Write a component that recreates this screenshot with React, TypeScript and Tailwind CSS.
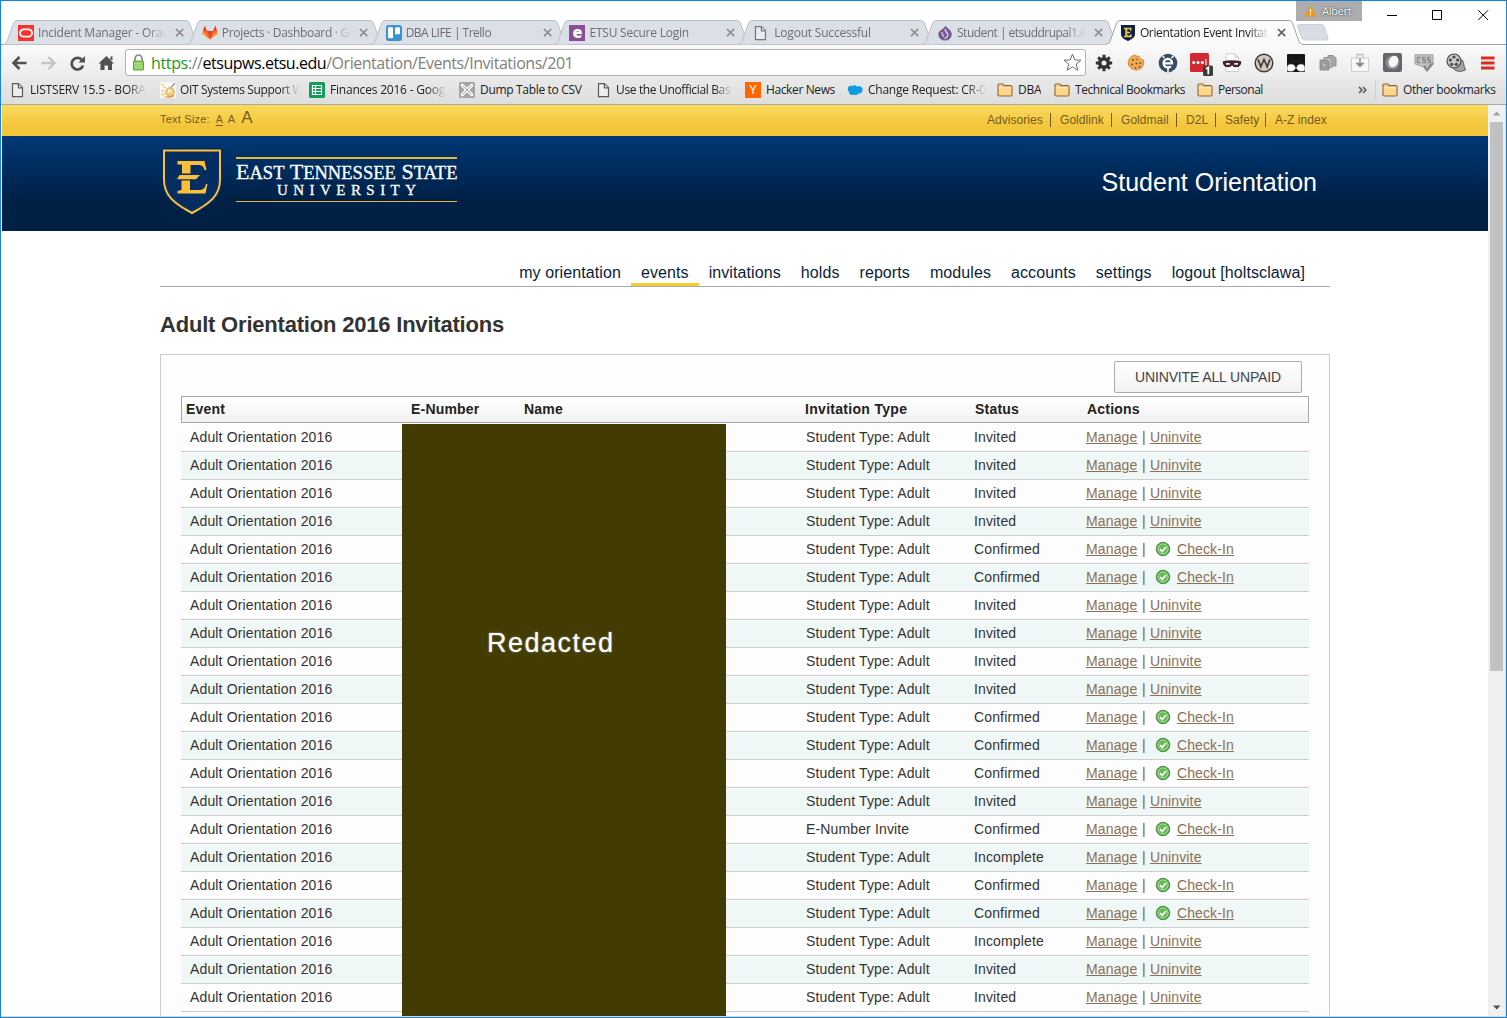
import React from "react";

const UI = "font-['Open_Sans','Noto_Sans',sans-serif]";
const fade = "[mask-image:linear-gradient(to_right,black_84%,transparent)]";

/* ---------- small drawings ---------- */
const PageIcon = ({ c = "#5a5a5a" }: { c?: string }) => (
  <svg width="16" height="16" viewBox="0 0 16 16" fill="#fff" fillOpacity=".4" stroke={c} strokeWidth="1.2">
    <path d="M2.5 1.6h6l4 4v9h-10z" />
    <path d="M8.4 1.6v4.2h4.1" />
  </svg>
);
const Oracle = () => (
  <svg width="16" height="16" viewBox="0 0 16 16">
    <rect width="16" height="16" fill="#f8312f" />
    <rect x="2" y="4.4" width="12" height="7.2" rx="3.6" fill="none" stroke="#fff" strokeWidth="1.9" />
  </svg>
);
const Gitlab = () => (
  <svg width="16" height="16" viewBox="0 0 16 16">
    <path d="M8 14.5 0 8.7l1-3 1.7-5 2.2 5.2h6.2l2.2-5.2 1.7 5 1 3z" fill="#fc9a3a" />
    <path d="M8 14.5 1 5.9h3.9zM8 14.5 15 5.9h-3.9z" fill="#f76b31" />
    <path d="M8 14.5 4.9 5.9h6.2zM1 5.9 2.7.7l2.2 5.2zM15 5.9 13.3.7l-2.2 5.2z" fill="#e24329" />
  </svg>
);
const Trello = () => (
  <svg width="16" height="16" viewBox="0 0 16 16">
    <rect width="16" height="16" rx="2.5" fill="#3a94cd" />
    <rect x="2" y="2.2" width="5" height="11" rx="1" fill="#fff" />
    <rect x="9" y="2.2" width="5" height="7" rx="1" fill="#fff" />
  </svg>
);
const Ellucian = () => (
  <span className="flex h-4 w-4 items-center justify-center bg-[#8a4d96] pb-[2px] font-['Open_Sans',sans-serif] text-[16px] leading-none font-extrabold text-white">
    e
  </span>
);
const Drupal = () => (
  <svg width="16" height="16" viewBox="0 0 16 16">
    <path d="M8.5.5C9 3 14.800 4.500 14.800 9.200A6.700 6.300 0 0 1 1.300 9.200C1.300 5 7 4.500 8.500.5z" fill="#775a98" />
    <path d="M8.200 4c-.5 3.200 3 3.300 2.600 6.300-.3 2-2 2.500-3.300 3.500M5.200 7c-1.500 2.500 2 2.800 1.600 5" fill="none" stroke="#dfe3ea" strokeWidth="1.2" />
  </svg>
);
const EtsuMini = () => (
  <svg width="16" height="16" viewBox="0 0 16 16">
    <path d="M1 0h14v9c0 4-4 5.500-7 7-3-1.500-7-3-7-7z" fill="#0b2149" />
    <path d="M4 2.700h7.500v3h-1.500V4.300H7.300v2.400H10v1.500H7.300v2.300h2.900V9.200h1.500v3H4v-1.500h1.300V4.300H4z" fill="#f5c63c" />
  </svg>
);
const Folder = () => (
  <svg width="16" height="14" viewBox="0 0 16 14" fill="none">
    <path d="M1 3.800V2.200Q1 1 2.200 1h3.400Q6.800 1 6.800 2.600h6.900Q15 2.600 15 3.900v7.900q0 1.200-1.200 1.200H2.200Q1 13 1 11.800z" fill="#fbd58a" stroke="#946330" strokeWidth="1.100" />
    <path d="M1.800 4.800h12.400" stroke="#ffefc7" />
  </svg>
);
const Sheet = () => (
  <svg width="16" height="16" viewBox="0 0 16 16">
    <rect width="16" height="16" rx="1.500" fill="#109d58" />
    <path d="M3.500 3.500h9v9h-9zM3.500 6.500h9M3.500 9.500h9M6.500 3.500v9" fill="none" stroke="#fff" strokeWidth="1.200" />
  </svg>
);
const Oit = () => (
  <svg width="16" height="16" viewBox="0 0 16 16">
    <rect width="16" height="16" fill="#fcf8f0" />
    <path d="M1 2l3 1.500M3 5l3 1M1 8.500l3 .5M1 13l4-1" stroke="#f3c78e" strokeWidth="1.300" fill="none" />
    <path d="M15 1l-4 4.500" stroke="#8aa2b8" strokeWidth="1.500" />
    <circle cx="10" cy="10" r="4.200" fill="#f5cf85" stroke="#e2a04c" />
    <circle cx="9.500" cy="9" r="1.700" fill="#fff4d8" />
    <path d="M5 14.500q5 1.500 9-1" stroke="#e08b2c" strokeWidth="1.300" fill="none" />
  </svg>
);
const Dump = () => (
  <svg width="16" height="16" viewBox="0 0 16 16">
    <rect width="16" height="16" rx="1.500" fill="#a0a5aa" />
    <path d="M3.300 3.300l9.400 9.400M12.700 3.300l-9.400 9.400" stroke="#fff" strokeWidth="3.200" strokeLinecap="round" />
    <path d="M3.600 3.600l8.800 8.800M12.400 3.600l-8.800 8.800" stroke="#a0a5aa" strokeWidth="1" />
  </svg>
);
const YC = () => (
  <span className="flex h-4 w-4 items-center justify-center bg-[#ff6600] font-['Liberation_Sans',sans-serif] text-[12px] leading-none text-white">Y</span>
);
const Cloud = () => (
  <svg width="16" height="16" viewBox="0 0 16 16">
    <g fill="#109cde">
      <circle cx="4" cy="7" r="3.200" /><circle cx="7.500" cy="6.200" r="3" /><circle cx="12" cy="7.800" r="3.600" /><circle cx="5" cy="10" r="3" /><circle cx="8.600" cy="10" r="3" />
    </g>
  </svg>
);

/* ---------- tab strip ---------- */
const TabShape = ({ active }: { active?: boolean }) => (
  <svg className="absolute inset-0" width="197" height="25" viewBox="0 0 197 25">
    <path
      d="M0 24.500C3 24 3.500 22.500 4.500 20L10 4.500C11 1.500 12 .5 15 .5H182C185 .5 186 1.500 187 4.500L192.500 20C193.500 22.500 194 24 197 24.500"
      fill={active ? "#fafafa" : "#dbdfe6"}
      stroke={active ? "#a0a0a0" : "#bcbfc4"}
    />
    {active && <path d="M1 24.500H196" stroke="#f9f9f9" strokeWidth="1.200" />}
  </svg>
);
const tabs = [
  { t: "Incident Manager - Orac", i: <Oracle />, s: "tracking-[-0.22px]" },
  { t: "Projects · Dashboard · Gi", i: <Gitlab />, s: "tracking-[-0.3px]" },
  { t: "DBA LIFE | Trello", i: <Trello />, s: "tracking-[-0.5px]" },
  { t: "ETSU Secure Login", i: <Ellucian />, s: "tracking-[-0.22px]" },
  { t: "Logout Successful", i: <PageIcon c="#777" />, s: "ml-[5px]! w-[128px]! tracking-[-0.2px]" },
  { t: "Student | etsuddrupal1.e", i: <Drupal />, s: "tracking-[-0.52px]" },
  { t: "Orientation Event Invitat", i: <EtsuMini />, s: "tracking-[-0.35px]" },
];
const TabStrip = () => (
  <div className="relative flex h-[44px] shrink-0 items-end border-b border-[#a0a3a7] bg-white pl-[2px]">
    {tabs.map((b, k) => {
      const active = k === 6;
      return (
        <div key={b.t} className={`relative mr-[-13.200px] mb-[-1px] flex h-[25px] w-[197px] shrink-0 items-center pl-[15px] ${active ? "z-10" : ""}`}>
          <TabShape active={active} />
          <span className={`relative flex h-4 w-4 shrink-0 ${active ? "left-[-1px]" : ""}`}>{b.i}</span>
          <span className={`relative ml-[4px] w-[129px] overflow-hidden text-[12px] leading-[18px] whitespace-nowrap ${UI} ${b.s} ${active ? "left-[-1px] text-[#222]" : "text-[#6c6f73]"} ${fade}`}>{b.t}</span>
          <svg className={`relative ml-[7px] ${active ? "left-[-1px]" : ""}`} width="11" height="11" viewBox="0 0 11 11">
            <path d="M2 2l7.200 7.200M9.200 2L2 9.200" stroke={active ? "#5f5f5f" : "#8c8c8c"} strokeWidth="1.700" />
          </svg>
        </div>
      );
    })}
    <svg className="mb-[3px] ml-[6px]" width="33" height="17" viewBox="0 0 33 17">
      <path d="M3 .5h22q2.500 0 3.500 2.500l3.500 11q.5 2-1.500 2H9q-2.500 0-3.500-2.500L1.500 2.500Q1 .5 3 .5z" fill="#d8dde5" stroke="#cdd1d7" />
    </svg>
    <div className="absolute top-0 right-0 flex items-start">
      <div className={`flex h-[20px] w-[66px] items-center gap-[5px] bg-[#adadad] pl-[8px] text-[11px] leading-[18px] text-white [text-shadow:0_0_2px_#333,0_0_1px_#555] ${UI}`}>
        <svg width="13" height="12" viewBox="0 0 13 12">
          <path d="M6.500.5l6 11H.5z" fill="#f29513" />
          <path d="M6.500 4v4M6.500 9v1.300" stroke="#fff" strokeWidth="1.200" />
        </svg>
        <span className="tracking-[-0.3px]">Albert</span>
      </div>
      <svg width="144" height="30" viewBox="0 0 144 30" fill="none" stroke="#000">
        <path d="M25 14.500h10M70.500 9.500h9v9h-9zM116.300 9.300l9.700 9.700M126 9.300l-9.700 9.700" />
      </svg>
    </div>
  </div>
);

/* ---------- toolbar ---------- */
const ext = [
  <svg width="18" height="18" viewBox="0 0 18 18"><circle cx="9" cy="9" r="4.300" fill="none" stroke="#333" strokeWidth="3.600" /><g stroke="#333" strokeWidth="3"><path d="M9 .8v3M9 14.200v3M.8 9h3M14.200 9h3M3.200 3.200l2 2M12.800 12.800l2 2M14.800 3.200l-2 2M5.200 12.800l-2 2" /></g></svg>,
  <svg width="18" height="18" viewBox="0 0 18 18"><path d="M8 1q2 2 4 1 .5 3 4.500 4 1.500 5-2.500 8.500-4.500 3-9 .5Q.5 12 1 8 2.500 2 8 1z" fill="#ecab55" stroke="#d08430" strokeWidth=".8" /><g fill="#8a4a1c"><circle cx="6" cy="6" r="1.100" /><circle cx="10" cy="5.500" r=".8" /><circle cx="5" cy="10.500" r="1" /><circle cx="9.500" cy="9.500" r="1.100" /><circle cx="13.300" cy="9" r=".9" /><circle cx="8.500" cy="13.800" r=".9" /><circle cx="12.500" cy="12.800" r=".9" /></g></svg>,
  <svg width="20" height="20" viewBox="0 0 20 20"><circle cx="10" cy="10" r="9.300" fill="#354d61" /><path d="M5.500 10.400h8.600a4.300 4.300 0 1 0-1.300 2.900" fill="none" stroke="#fff" strokeWidth="2.300" /><path d="M10 14v5M4.500 3l2 2M15.500 3l-2 2" stroke="#fff" strokeWidth="1.500" /></svg>,
  <svg className="shrink-0" width="26" height="26" viewBox="0 0 26 26"><rect x="3" y="3" width="19" height="19" rx="1.500" fill="#d32932" /><g fill="#fff"><circle cx="6.700" cy="12.500" r="1.500" /><circle cx="11" cy="12.500" r="1.500" /><circle cx="15.300" cy="12.500" r="1.500" /><path d="M18.500 9h1v7h-1z" /></g><rect x="16" y="15.500" width="10" height="10.500" rx="1.500" fill="#3c3c3c" /><path d="M19 18.800l2.300-1.200v6.700" fill="none" stroke="#fff" strokeWidth="1.800" /></svg>,
  <svg width="20" height="20" viewBox="0 0 20 20"><path d="M4 .8h9l3.500 3.500V18.500H4z" fill="#fff" stroke="#c4c4c4" strokeWidth=".8" /><path d="M13 .8v3.500h3.500" fill="#e4e4e4" stroke="#c4c4c4" strokeWidth=".8" /><path d="M.8 8.200q9.200-2 18.400 0 .3 6-5.700 6-2.500 0-3.500-2-1 2-3.500 2-6 0-5.700-6z" fill="#43242a" /><path d="M4 10.800h3.800M12.200 10.800H16" stroke="#f7ecec" strokeWidth="1.700" /></svg>,
  <svg width="20" height="20" viewBox="0 0 20 20"><circle cx="10" cy="10" r="8.800" fill="#d2c9c5" stroke="#3e3735" strokeWidth="1.400" /><path d="M4 6.200l2.800 7.500L10 6.500l3.200 7.200L16 6.200" fill="none" stroke="#463b38" strokeWidth="1.700" /></svg>,
  <svg width="18" height="18" viewBox="0 0 18 18"><rect width="18" height="18" rx="1" fill="#161616" /><path d="M0 16.500V14q0-4 4.200-4 3.800 0 4.300 3.500h1Q10 10 13.800 10 18 10 18 14v2.500q-1 1-4.200 1-3.300 0-4.300-3h-1q-1 3-4.300 3T0 16.500z" fill="#fff" stroke="#555" strokeWidth=".6" /></svg>,
  <svg width="18" height="18" viewBox="0 0 18 18" fill="#a9a9a9" stroke="#8c8c8c" strokeWidth=".9"><path d="M9 1.500h5l3 2.500v8H9z" /><path d="M5 3.500h6l2 2v8H5z" fill="#b9b9b9" /><path d="M1 6h7l2 2v8H1z" fill="#9d9d9d" /><path d="M3 9h4v4H3z" fill="#bdbdbd" /></svg>,
  <svg width="20" height="20" viewBox="0 0 20 20"><path d="M1.500 5h17v13.500h-17z" fill="#f7f7f7" stroke="#cecece" /><path d="M7 5V1.500h6V5" fill="none" stroke="#c2c2c2" strokeWidth="1.500" /><path d="M10 5v7M7 10.500l3 3 3-3z" fill="#8d8d8d" stroke="#8d8d8d" strokeWidth="1.500" /></svg>,
  <svg width="19" height="19" viewBox="0 0 19 19"><rect width="19" height="19" rx="2" fill="#626569" /><circle cx="9.500" cy="9.500" r="7" fill="#8d9092" /><ellipse cx="10.500" cy="8.500" rx="4.500" ry="6" transform="rotate(25 10.500 8.500)" fill="#f8f8f8" /></svg>,
  <svg width="20" height="18" viewBox="0 0 20 18"><path d="M1 .800h18V10l-9 3-9-3z" fill="#c3c3c3" stroke="#a2a2a2" /><path d="M6.500 3.500h-3v5h3M11.500 3.500H8.700V6h2.600v2.500H8.500M16.500 3.500h-2.800V6h2.600v2.500h-2.800" fill="none" stroke="#8a8a8a" strokeWidth="1.300" /><path d="M10 12l3 4 6-7" fill="none" stroke="#858585" strokeWidth="2.500" /></svg>,
  <svg width="20" height="20" viewBox="0 0 20 20"><path d="M13 5q5 2 5 8l1.500 4-5 1.500q-6 0-8-4" fill="#a5a5a5" stroke="#5a5a5a" /><circle cx="8" cy="8" r="7" fill="#c9c9c9" stroke="#4a4a4a" strokeWidth="1.200" /><g fill="#4a4a4a"><circle cx="8" cy="4" r="1.600" /><circle cx="4.300" cy="7" r="1.600" /><circle cx="11.700" cy="7" r="1.600" /><circle cx="5.700" cy="11.300" r="1.600" /><circle cx="10.300" cy="11.300" r="1.600" /></g></svg>,
  <svg width="14" height="14" viewBox="0 0 14 14" fill="#dc2b1f"><path d="M0 .5h13.500v3H0zM0 5.500h13.500v3H0zM0 10.500h13.500v3H0z" /></svg>,
];
const Toolbar = () => (
  <div className="flex h-[35px] shrink-0 items-center bg-gradient-to-b from-[#fafafa] to-[#eaeaea] pl-[10px]">
    <svg width="106" height="18" viewBox="0 0 106 18" fill="none">
      <path d="M15.500 9H3M8.500 3L2.500 9l6 6" stroke="#505050" strokeWidth="2.600" />
      <path d="M30.500 9H43M37.500 3l6 6-6 6" stroke="#c5c5c5" strokeWidth="2.400" />
      <path d="M70.800 5.800A5.800 5.800 0 1 0 72 11.500" stroke="#505050" strokeWidth="2.700" />
      <path d="M74 2v6.500h-6.500z" fill="#505050" />
      <path d="M95.500 2l7.500 7.500h-2V16h-4v-4.500h-3.500V16h-4V9.500h-2zM99.500 2.500h2V6h-2z" fill="#505050" />
    </svg>
    <div className="ml-[8px] flex h-[27px] w-[961px] items-center rounded-[3px] border border-[#b0b0b0] bg-white pl-[6px]">
      <svg width="13" height="17" viewBox="0 0 13 17">
        <path d="M3 8V4.500a3.500 3.500 0 0 1 7 0V8" fill="none" stroke="#8a8a8a" strokeWidth="1.700" />
        <rect x="1.500" y="7" width="10" height="9" rx=".5" fill="#8fd05f" stroke="#58a636" />
        <path d="M2.500 9.500h8M2.500 11.500h8M2.500 13.500h8" stroke="#a8df80" />
      </svg>
      <span className={`ml-[6px] w-[900px] text-[16px] leading-[22px] tracking-[-0.46px] whitespace-nowrap text-[#808080] ${UI}`}>
        <span className="tracking-[-0.35px] text-[#1a9a26]">https</span>://<span className="text-black">etsupws.etsu.edu</span>/Orientation/Events/Invitations/201
      </span>
      <svg className="ml-auto mr-[3px]" width="19" height="19" viewBox="0 0 19 19">
        <path d="M9.500 1l2.300 5.900 6.200.3-4.900 3.900 1.700 6.200-5.300-3.500-5.300 3.500 1.700-6.200L1 7.200l6.200-.3z" fill="#fff" stroke="#6f6f6f" />
      </svg>
    </div>
    <div className="ml-[2px] flex">
      {ext.map((e, k) => (
        <span key={k} className="flex h-[26px] w-8 shrink-0 items-center justify-center">{e}</span>
      ))}
    </div>
  </div>
);

/* ---------- bookmarks ---------- */
const marks = [
  { t: "LISTSERV 15.5 - BORA", i: <PageIcon />, w: "w-[150px]", g: "ml-[4px] w-[116px]", f: true, s: "tracking-[-0.2px]" },
  { t: "OIT Systems Support W", i: <Oit />, w: "w-[149px]", g: "ml-[4px] w-[120px]", f: true, s: "tracking-[-0.36px]" },
  { t: "Finances 2016 - Goog", i: <Sheet />, w: "w-[150px]", g: "ml-[5px] w-[116px]", f: true, s: "tracking-[-0.2px]" },
  { t: "Dump Table to CSV", i: <Dump />, w: "w-[137px]", g: "ml-[5px]", s: "tracking-[-0.32px]" },
  { t: "Use the Unofficial Bas", i: <PageIcon />, w: "w-[149px]", g: "ml-[4px] w-[117px]", f: true, s: "tracking-[-0.35px]" },
  { t: "Hacker News", i: <YC />, w: "w-[102px]", g: "ml-[5px]", s: "tracking-[-0.38px]" },
  { t: "Change Request: CR-0", i: <Cloud />, w: "w-[150px]", g: "ml-[5px] w-[118px]", f: true, s: "tracking-[-0.25px]" },
  { t: "DBA", i: <Folder />, w: "w-[57px]", g: "ml-[5px]", s: "tracking-[-0.2px]" },
  { t: "Technical Bookmarks", i: <Folder />, w: "w-[143px]", g: "ml-[5px]", s: "tracking-[-0.45px]" },
  { t: "Personal", i: <Folder />, w: "w-[160px]", g: "ml-[5px]", s: "tracking-[-0.5px]" },
];
const Bookmarks = () => (
  <div className={`flex h-[25px] shrink-0 items-center border-b border-[#a9a9a9] bg-gradient-to-b from-[#e8e8e8] to-[#dedede] pb-[4px] pl-[9px] text-[12px] leading-[18px] text-[#222] ${UI}`}>
    {marks.map((m) => (
      <div key={m.t} className={`flex shrink-0 items-center ${m.w}`}>
        <span className="flex w-4 shrink-0">{m.i}</span>
        <span className={`overflow-hidden whitespace-nowrap ${m.g} ${m.s} ${m.f ? fade : ""}`}>{m.t}</span>
      </div>
    ))}
    <svg className="ml-px" width="9" height="8" viewBox="0 0 9 8" fill="none" stroke="#555" strokeWidth="1.500">
      <path d="M1 1l3 3-3 3M5 1l3 3-3 3" />
    </svg>
    <span className="ml-[8px] h-[20px] w-px bg-[#cdd2d8]" />
    <span className="ml-[6px] flex w-4 shrink-0"><Folder /></span>
    <span className="ml-[5px] tracking-[-0.4px] whitespace-nowrap">Other bookmarks</span>
  </div>
);

/* ---------- site ---------- */
const links = [
  { t: "Advisories", c: "w-[64px]" },
  { t: "Goldlink", c: "w-[52px]" },
  { t: "Goldmail", c: "w-[56px]" },
  { t: "D2L", c: "w-[30px]" },
  { t: "Safety", c: "w-[41px]" },
  { t: "A-Z index", c: "w-[54px]" },
];
const SiteHeader = () => (
  <>
    <div className="flex h-[31px] shrink-0 items-start justify-between bg-gradient-to-b from-[#fadb5c] to-[#f3c53a] to-70% pr-[157px] pl-[158px] text-[#735a1d]">
      <div className="flex items-baseline pt-[3px] text-[11px] leading-[19px] tracking-[0.22px]">
        <span>Text Size:</span>
        <span className="ml-[5px] px-px text-[10px] underline underline-offset-2">A</span>
        <span className="ml-[4px] text-[11px]">A</span>
        <span className="ml-[6px] text-[17px]">A</span>
      </div>
      <div className="mt-[8px] flex text-[12px] leading-[14px] tracking-[0.05px]">
        {links.map((l, k) => (
          <span key={l.t} className={`mr-[9px] h-[14px] shrink-0 whitespace-nowrap last:mr-[2px] ${l.c} ${k < 5 ? "border-r border-[#735a1d]" : ""}`}>{l.t}</span>
        ))}
      </div>
    </div>
    <div className="flex h-[95px] shrink-0 items-start justify-between bg-gradient-to-b from-[#003876] to-[#002045] to-70% pr-[171px] pl-[159px] text-white">
      <div className="flex">
        <svg className="mt-[11px]" width="62" height="70" viewBox="0 0 62 70">
          <path d="M1 1h60v33c0 17-12 25-30 34C13 59 1 51 1 34z" fill="#002b5c" />
          <path d="M3 3.500h56v29c0 16-10 24-28 33.500C13 56.500 3 48.500 3 32.500z" fill="#042d62" stroke="#fdbf38" strokeWidth="2" />
          <g fill="#fdbf38">
            <path d="M16.500 14h27l2 9h-2q-1-5-6-5h-8v8.500h-8.500V17.500h-4.500v-2z" />
            <path d="M18.500 28H39l-4 4.200H16z" />
            <path d="M20.500 33.500H29v9.500h9q6 0 7-6H46.500l-2 9.500H16.500V44l4-1z" />
          </g>
        </svg>
        <div className="mt-[21px] ml-[13px] flex h-[45px] w-[221px] flex-col border-t-2 border-b border-[#eab740] font-['Liberation_Serif',serif]">
          <div className="mt-[2px] text-[22px] leading-[22px] tracking-[0.03px] whitespace-nowrap [-webkit-text-stroke:0.3px_white]">
            E<span className="text-[18.500px]">AST</span> T<span className="text-[18.500px]">ENNESSEE</span> S<span className="text-[18.500px]">TATE</span>
          </div>
          <div className="mt-[-2px] ml-[41px] text-[15px] leading-[17px] tracking-[5.450px] whitespace-nowrap [-webkit-text-stroke:0.3px_white]">UNIVERSITY</div>
        </div>
      </div>
      <div className="mt-[31px] text-[25px] leading-[30px] whitespace-nowrap">Student Orientation</div>
    </div>
  </>
);

const nav = ["my orientation", "events", "invitations", "holds", "reports", "modules", "accounts", "settings", "logout [holtsclawa]"];
const Nav = () => (
  <div className="mt-[29px] flex h-[27px] shrink-0 justify-end border-b border-[#aaa] pr-[15px] text-[16px] leading-[26px] tracking-[0.09px] text-[#0b1d3a]">
    {nav.map((n) => (
      <span key={n} className={`h-[26px] px-[10px] whitespace-nowrap ${n === "events" ? "border-b-[3px] border-[#f5cf2a]" : ""}`}>{n}</span>
    ))}
  </div>
);

const Check = () => (
  <svg width="16" height="16" viewBox="0 0 16 16">
    <circle cx="8" cy="8" r="6.800" fill="#4fa845" stroke="#397b33" strokeWidth=".8" />
    <circle cx="8" cy="8" r="5.100" fill="#64bb55" stroke="#b7e0a8" strokeWidth="1" />
    <path d="M5 8.200l2.200 2.200L11 6" fill="none" stroke="#fff" strokeWidth="1.800" />
  </svg>
);

const statuses = "IIIICCIIIICCCICNCCNII".split("");
const label: Record<string, string> = { I: "Invited", C: "Confirmed", N: "Incomplete" };

const Row = ({ s, k }: { s: string; k: number }) => (
  <div className="h-[28px] border-b border-[#ccc] pt-px">
    <div className={`grid h-[26px] grid-cols-[616px_168px_112px_1fr] pl-[9px] leading-[25px] ${k % 2 ? "bg-[#f0f7f7]" : ""}`}>
      <span>Adult Orientation 2016</span>
      <span>{k === 14 ? "E-Number Invite" : "Student Type: Adult"}</span>
      <span>{label[s]}</span>
      <span className="flex h-[25px] items-center whitespace-pre text-[#8b6f55]">
        <a className="underline">Manage</a>
        <span className="ml-[0.600px] text-[#6f5f50]"> | </span>
        {s === "C" ? (
          <>
            <span className="mr-[6px] mb-px ml-[5px]"><Check /></span>
            <a className="underline">Check-In</a>
          </>
        ) : (
          <a className="underline">Uninvite</a>
        )}
      </span>
    </div>
  </div>
);

const Content = () => (
  <div className="mr-[158px] ml-[158px] flex min-h-0 flex-1 flex-col">
    <Nav />
    <h1 className="mt-[23px] text-[22px] leading-[30px] font-bold tracking-[-0.2px] whitespace-nowrap text-[#333]">Adult Orientation 2016 Invitations</h1>
    <div className="mt-[14px] flex min-h-0 flex-1 flex-col overflow-hidden border border-b-0 border-[#ccc] bg-[#fdfdfd] px-[20px] pt-[6px]">
      <button className="mr-[7px] h-[32px] w-[188px] shrink-0 self-end rounded-[2px] border border-[#aaa] bg-gradient-to-b from-white to-[#f2f2f2] text-[14px] leading-[30px] tracking-[-0.13px] whitespace-nowrap text-[#444]">UNINVITE ALL UNPAID</button>
      <div className="relative mt-[3px] text-[14px] tracking-[0.14px] text-[#333]">
        <div className="mb-px grid h-[27px] grid-cols-[225px_113px_281px_170px_112px_1fr] border border-[#a8a8a8] bg-gradient-to-b from-white to-[#f2f2f2] pl-[4px] leading-[24px] font-bold tracking-[0.2px] text-[#222]">
          <span>Event</span><span>E-Number</span><span>Name</span><span className="tracking-[0.3px]">Invitation Type</span><span>Status</span><span>Actions</span>
        </div>
        {statuses.map((s, k) => <Row key={k} s={s} k={k} />)}
        <div className="absolute top-[28px] left-[221px] h-[600px] w-[324px] bg-[#423b03] pt-[201px] pl-[85px] text-[27px] leading-[36px] tracking-[1.500px] text-white [text-shadow:0_0_2px_#aaa]">Redacted</div>
      </div>
    </div>
  </div>
);

const Scrollbar = () => (
  <div className="flex w-[18px] shrink-0 flex-col items-center border-r border-[#d8d8d8] bg-[#f0f0f0]">
    <svg width="17" height="17" viewBox="0 0 17 17"><path d="M5 10.500h7.500L8.700 6.500z" fill="#a3a3a3" /></svg>
    <div className="h-[549px] w-[13px] bg-[#c1c1c1]" />
    <svg className="mt-auto" width="17" height="17" viewBox="0 0 17 17"><path d="M5 6.500h7.500L8.700 10.500z" fill="#505050" /></svg>
  </div>
);

export default function App() {
  return (
    <div className="flex h-[1018px] w-full flex-col overflow-hidden border border-[#1883d7] bg-white font-['Liberation_Sans',Arial,sans-serif]">
      <TabStrip />
      <Toolbar />
      <Bookmarks />
      <div className="flex min-h-0 flex-1 border-b border-[#d8d8d8] pl-px">
        <div className="flex min-w-0 flex-1 flex-col">
          <SiteHeader />
          <Content />
        </div>
        <Scrollbar />
      </div>
    </div>
  );
}
